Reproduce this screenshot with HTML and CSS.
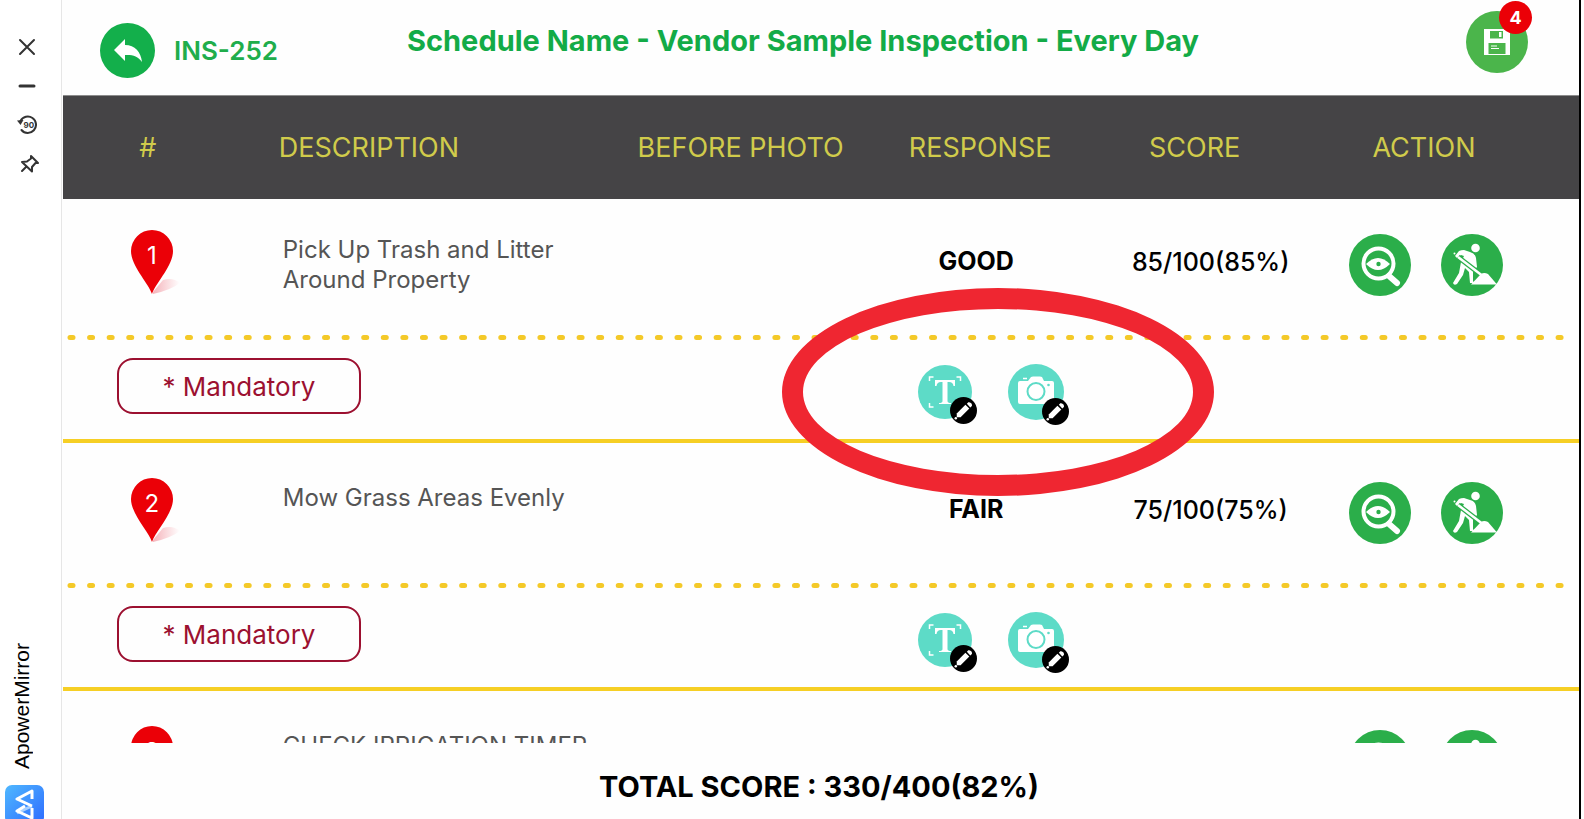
FILE: index.html
```html
<!DOCTYPE html>
<html lang="en">
<head>
    <meta charset="utf-8">
    <title>INS-252</title>
    <link rel="stylesheet" href="styles.css">
</head>
<body>
    <!-- shared icons -->
    <svg class="icon-defs" aria-hidden="true">
        <symbol id="pin" viewBox="0 0 52 68">
            <path d="M22 62 L32 50 Q42 47 49 53 Q40 60 22 64z" fill="url(#pin-shadow)"/>
            <path d="M21 64 C18 54 0 36 0 21 A21 21 0 0 1 42 21 C42 36 24 54 21 64z" fill="#eb0007"/>
        </symbol>
        <linearGradient id="pin-shadow" x1="0" y1="0" x2="1" y2="0">
            <stop offset="0" stop-color="#f5b4bb"/>
            <stop offset="1" stop-color="#fff"/>
        </linearGradient>
        <symbol id="view" viewBox="0 0 62 62">
            <circle cx="31" cy="31" r="31" fill="#2bae4a"/>
            <path d="M40 42 L48 49" stroke="#fff" stroke-width="6" stroke-linecap="round"/>
            <circle cx="29.500" cy="29.500" r="15" fill="none" stroke="#fff" stroke-width="4"/>
            <path d="M17 30 Q29 18 41 30 Q29 42 17 30z" fill="#fff"/>
            <circle cx="29.500" cy="30" r="2.200" fill="#2bae4a"/>
        </symbol>
        <symbol id="work" viewBox="0 0 62 62">
            <circle cx="31" cy="31" r="31" fill="#2bae4a"/>
            <circle cx="34.500" cy="14" r="4.300" fill="#fff"/>
            <path d="M14 22 L18 17 Q20 16 23 16 L29 18 Q34 19 35 24 L36 33 L32 38 L32 47 L33 49 L29 49 L28 38 L24 34 L22 41 L16 50 Q13 52 12 49 L18 39 L20 28 L23 22 L20 21 L16 24z" fill="#fff"/>
            <path d="M17 23 L43 43" stroke="#2bae4a" stroke-width="5"/>
            <path d="M17 23 L43 43" stroke="#fff" stroke-width="2.500"/>
            <path d="M30 50.500 L40 40 Q43 38 47 40 L56 50.500z" fill="#fff"/>
            <circle cx="13.500" cy="19.500" r="1" fill="#fff"/>
        </symbol>
        <symbol id="text" viewBox="0 0 54 54">
            <circle cx="27" cy="27" r="27" fill="#5ddbc7"/>
            <path d="M11.500 16 v-4 h4 M38.500 12 h4 v4 M11.500 38 v4 h4" fill="none" stroke="#fff" stroke-width="1.500"/>
            <path d="M17 15 H37 V21 H35.500 Q35 17 31 17 H29.500 V36 Q29.500 38 33 38 V39 H21 V38 Q24.500 38 24.500 36 V17 H23 Q19 17 18.500 21 H17z" fill="#fff"/>
        </symbol>
        <symbol id="camera" viewBox="0 0 56 56">
            <circle cx="28" cy="28" r="28" fill="#5ddbc7"/>
            <path d="M15 14.500 h4" stroke="#fff" stroke-width="1.500"/>
            <path d="M12 17 H20 L23 13 Q24 12.500 25 12.500 H32 Q33 12.500 34 13 L36 17 H44 Q46 17 46 19 V38 Q46 40 44 40 H12 Q10 40 10 38 V19 Q10 17 12 17z" fill="#fff"/>
            <circle cx="28" cy="27.500" r="8.500" fill="none" stroke="#5ddbc7" stroke-width="2"/>
            <circle cx="40.500" cy="21" r="1.300" fill="#5ddbc7"/>
        </symbol>
        <symbol id="pencil" viewBox="0 0 28 28">
            <circle cx="14" cy="14" r="14" fill="#000"/>
            <path d="M7 17 L16 8 L20 12 L11 21 L7 21z" fill="#fff"/>
            <path d="M17.500 7 L19 5.500 Q21 5 22.500 7 Q23.500 9 22 10 L21 11z" fill="#fff"/>
            <circle cx="6" cy="22" r="1.300" fill="#fff"/>
        </symbol>
    </svg>

    <div class="app">
        <!-- mirror toolbar -->
        <aside class="sidebar">
            <div class="tools">
                <button class="tool" aria-label="Close">
                    <svg width="18" height="18" viewBox="0 0 18 18"><path d="M2 2 L16 16 M16 2 L2 16"/></svg>
                </button>
                <button class="tool" aria-label="Minimize">
                    <svg width="18" height="18" viewBox="0 0 18 18"><path d="M2 9 H16" stroke-width="3"/></svg>
                </button>
                <button class="tool" aria-label="Rotate">
                    <svg width="20" height="20" viewBox="0 0 20 20">
                        <path d="M3.500 6 A8.200 8.200 0 1 1 4.500 15"/>
                        <path d="M0 5.500 L6.500 5 L3.500 10z" fill="#333" stroke-width="0"/>
                        <text x="6.500" y="13" font-size="8">90</text>
                    </svg>
                </button>
                <button class="tool tool-pin" aria-label="Pin">
                    <svg width="20" height="20" viewBox="0 0 20 20"><path d="M11 2 L18 9 L15.500 9 L12 13 L12 17.500 L2 8 L7 7.500 L11 4.500z M6.500 12.500 L2 17"/></svg>
                </button>
            </div>
            <div class="brand">
                <span class="brand-name">ApowerMirror</span>
                <svg class="brand-logo" viewBox="0 0 39 39">
                    <defs>
                        <linearGradient id="brand-bg" x1="0" y1="0" x2="1" y2="1">
                            <stop offset="0" stop-color="#4fb8ff"/>
                            <stop offset="1" stop-color="#2e6bff"/>
                        </linearGradient>
                    </defs>
                    <rect width="39" height="39" rx="7" fill="url(#brand-bg)"/>
                    <path d="M27 21 L12 28" stroke="#a9d0ff" stroke-width="3"/>
                    <path d="M27 14 V6 L12 14 L27 21 M27 23 V33 L12 26 L20 21" fill="none" stroke="#fff" stroke-width="3" stroke-linejoin="round"/>
                </svg>
            </div>
        </aside>

        <main class="main">
            <header class="header">
                <div class="header-left">
                    <button class="back-btn" aria-label="Back">
                        <svg width="55" height="55" viewBox="0 0 55 55">
                            <circle cx="27.500" cy="27.500" r="27.500" fill="#13af4b"/>
                            <path d="M14 27 L25 16 V22 C35 22 41 29 42 39 C38 33 32 31.500 25 32 V38z" fill="#fff"/>
                        </svg>
                    </button>
                    <span class="ticket">INS-252</span>
                </div>
                <h1 class="title">Schedule Name - Vendor Sample Inspection - Every Day</h1>
                <button class="save-btn" aria-label="Save">
                    <svg width="62" height="62" viewBox="0 0 62 62">
                        <circle cx="31" cy="31" r="31" fill="#4bb54b"/>
                        <path d="M18 18 H44 V44 H18z" fill="#fff"/>
                        <path d="M24 20 H37 V27.500 H24z M22.500 32 H39.500 V43 H22.500z" fill="#4bb54b"/>
                        <path d="M33 21 h2.500 v5 h-2.500z" fill="#fff"/>
                        <path d="M25 35 h6 M25 37.500 h8" stroke="#fff" stroke-width="1"/>
                    </svg>
                    <span class="badge">4</span>
                </button>
            </header>

            <div class="list">
                <table class="inspection">
                    <colgroup>
                        <col class="col-num">
                        <col class="col-desc">
                        <col class="col-photo">
                        <col class="col-response">
                        <col class="col-score">
                        <col class="col-action">
                    </colgroup>
                    <thead>
                        <tr>
                            <th>#</th>
                            <th class="desc">DESCRIPTION</th>
                            <th>BEFORE PHOTO</th>
                            <th>RESPONSE</th>
                            <th>SCORE</th>
                            <th class="action">ACTION</th>
                        </tr>
                    </thead>
                    <tbody>
                        <tr class="item">
                            <td class="num"><div class="pin"><svg><use href="#pin"/></svg><span>1</span></div></td>
                            <td class="desc">Pick Up Trash and Litter Around Property</td>
                            <td></td>
                            <td class="response">GOOD</td>
                            <td class="score">85/100(85%)</td>
                            <td class="action">
                                <div class="actions">
                                    <button aria-label="View"><svg><use href="#view"/></svg></button>
                                    <button aria-label="Work"><svg><use href="#work"/></svg></button>
                                </div>
                            </td>
                        </tr>
                        <tr class="dots"><td colspan="6"><svg><line x1="7" y1="2.500" x2="99%" y2="2.500"/></svg></td></tr>
                        <tr class="extra">
                            <td colspan="3"><span class="mandatory">* Mandatory</span></td>
                            <td>
                                <div class="notes">
                                    <button class="note note-text" aria-label="Edit text"><svg><use href="#text"/></svg><svg class="edit"><use href="#pencil"/></svg></button>
                                    <button class="note note-photo" aria-label="Edit photo"><svg><use href="#camera"/></svg><svg class="edit"><use href="#pencil"/></svg></button>
                                </div>
                            </td>
                            <td colspan="2"></td>
                        </tr>
                    </tbody>
                    <tbody>
                        <tr class="item">
                            <td class="num"><div class="pin"><svg><use href="#pin"/></svg><span>2</span></div></td>
                            <td class="desc">Mow Grass Areas Evenly</td>
                            <td></td>
                            <td class="response">FAIR</td>
                            <td class="score">75/100(75%)</td>
                            <td class="action">
                                <div class="actions">
                                    <button aria-label="View"><svg><use href="#view"/></svg></button>
                                    <button aria-label="Work"><svg><use href="#work"/></svg></button>
                                </div>
                            </td>
                        </tr>
                        <tr class="dots"><td colspan="6"><svg><line x1="7" y1="2.500" x2="99%" y2="2.500"/></svg></td></tr>
                        <tr class="extra">
                            <td colspan="3"><span class="mandatory">* Mandatory</span></td>
                            <td>
                                <div class="notes">
                                    <button class="note note-text" aria-label="Edit text"><svg><use href="#text"/></svg><svg class="edit"><use href="#pencil"/></svg></button>
                                    <button class="note note-photo" aria-label="Edit photo"><svg><use href="#camera"/></svg><svg class="edit"><use href="#pencil"/></svg></button>
                                </div>
                            </td>
                            <td colspan="2"></td>
                        </tr>
                    </tbody>
                    <tbody>
                        <tr class="item">
                            <td class="num"><div class="pin"><svg><use href="#pin"/></svg><span>3</span></div></td>
                            <td class="desc">CHECK IRRIGATION TIMER</td>
                            <td></td>
                            <td></td>
                            <td></td>
                            <td class="action">
                                <div class="actions">
                                    <button aria-label="View"><svg><use href="#view"/></svg></button>
                                    <button aria-label="Work"><svg><use href="#work"/></svg></button>
                                </div>
                            </td>
                        </tr>
                    </tbody>
                </table>
            </div>

            <footer class="total">TOTAL SCORE : 330/400(82%)</footer>

            <!-- highlight round the note buttons -->
            <div class="highlight"></div>
        </main>
    </div>
</body>
</html>
```

FILE: styles.css
```css
* {
    box-sizing: border-box;
}

body {
    margin: 0;
    background: #fefefe;
    font-family: Inter, "Liberation Sans", sans-serif;
    color: #000;
    overflow: hidden;
}

button {
    padding: 0;
    border: 0;
    background: none;
    font: inherit;
    cursor: pointer;
}

svg {
    display: block;
}

.icon-defs {
    position: absolute;
    width: 0;
    height: 0;
}

.app {
    display: flex;
    height: 100vh;
    padding-right: 3px;
}

/* sidebar */
.sidebar {
    display: flex;
    flex-direction: column;
    justify-content: space-between;
    width: 63px;
    flex-shrink: 0;
    background: linear-gradient(to right, #fff 61px, #e6e6e6 61px, #e6e6e6 62px, #fefefe 62px);
}

.tools {
    display: flex;
    flex-direction: column;
    align-items: flex-start;
    gap: 19px;
    padding: 37px 0 0 17px;
}

.tool {
    display: flex;
    align-items: center;
    justify-content: center;
    width: 20px;
    height: 20px;
}

.tool svg {
    fill: none;
    stroke: #333;
    stroke-width: 2;
    stroke-linecap: round;
    stroke-linejoin: round;
}

.tool text {
    fill: #333;
    stroke: none;
    font-weight: 700;
}

.tool-pin {
    margin-left: 3px;
}

.brand {
    display: flex;
    flex-direction: column;
    align-items: flex-start;
    gap: 16px;
    padding-left: 5px;
    margin-bottom: -5px;
}

.brand-name {
    width: 34px;
    writing-mode: vertical-rl;
    transform: rotate(180deg);
    font: 21px/34px "Liberation Sans", Arial, sans-serif;
}

.brand-logo {
    width: 39px;
    height: 39px;
}

/* main area */
.main {
    position: relative;
    display: flex;
    flex: 1;
    flex-direction: column;
    min-width: 0;
    border-right: 2px solid #000;
}

.header {
    display: grid;
    grid-template-columns: 200px 1fr 222px;
    align-items: start;
    height: 96px;
    flex-shrink: 0;
    padding: 11px 51px 0 37px;
    border-bottom: 1px solid #8c8c8c;
}

.header-left {
    display: flex;
    align-items: center;
    gap: 19px;
    padding-top: 12px;
}

.ticket {
    color: #20ad4b;
    font-size: 26px;
    font-weight: 600;
    white-space: nowrap;
}

.title {
    margin: 12px 0 0;
    color: #13ab47;
    font-size: 29px;
    font-weight: 700;
    line-height: 36px;
    text-align: center;
    white-space: nowrap;
}

.save-btn {
    position: relative;
    justify-self: end;
}

.badge {
    position: absolute;
    top: -10px;
    right: -4px;
    width: 33px;
    height: 33px;
    border-radius: 50%;
    background: #eb0007;
    color: #fff;
    font-size: 18px;
    font-weight: 700;
    line-height: 33px;
    text-align: center;
}

/* inspection table */
.list {
    flex: 1;
    min-height: 0;
    overflow: hidden;
}

.inspection {
    width: 100%;
    table-layout: fixed;
    border-collapse: separate;
    border-spacing: 0;
}

.col-num { width: 11.2%; }
.col-desc { width: 25.5%; }
.col-photo { width: 16%; }
.col-response { width: 15.6%; }
.col-score { width: 12.7%; }
.col-action { width: 19%; }

.inspection th {
    height: 99px;
    padding: 4px 0 0;
    background: #454446;
    box-shadow: 0 4px 0 #454446;
    color: #d0cb4b;
    font-size: 27px;
    font-weight: 400;
    text-align: center;
}

.inspection th.desc {
    padding-left: 46px;
    text-align: left;
}

.inspection th.action {
    padding-right: 22px;
}

.inspection td {
    padding: 0;
    vertical-align: top;
    font-size: 24px;
    line-height: 30px;
    text-align: center;
}

.item td {
    height: 140px;
}

.item .num {
    padding: 35px 0 0 8px;
}

.pin {
    position: relative;
    width: 42px;
    margin: 0 auto;
}

.pin svg {
    width: 52px;
    height: 68px;
}

.pin span {
    position: absolute;
    top: 11px;
    left: 0;
    width: 42px;
    color: #fff;
}

.item .desc {
    padding: 40px 20px 0 50px;
    color: #555;
    text-align: left;
}

.item .response {
    padding: 51px 8px 0 0;
    font-size: 25px;
    font-weight: 700;
}

.item .score {
    padding: 52px 0 0 32px;
    font-size: 25px;
    font-weight: 500;
    white-space: nowrap;
}

.item .action {
    padding: 39px 18px 0 0;
}

.actions {
    display: flex;
    justify-content: center;
    gap: 30px;
}

.actions svg {
    width: 62px;
    height: 62px;
}

.dots svg {
    width: 100%;
    height: 5px;
}

.dots line {
    stroke: #f4c928;
    stroke-width: 5;
    stroke-linecap: round;
    stroke-dasharray: 3 16.58;
}

.extra td {
    height: 103px;
    border-bottom: 4px solid #f6cf25;
    text-align: left;
}

.mandatory {
    display: block;
    width: 244px;
    margin: 18px 0 0 54px;
    padding-top: 2px;
    border: 2px solid #9c1030;
    border-radius: 16px;
    color: #9c1030;
    font-size: 26px;
    line-height: 50px;
    text-align: center;
}

.notes {
    display: flex;
    align-items: center;
    justify-content: center;
    gap: 36px;
    padding: 24px 0 0 22px;
}

.note {
    position: relative;
}

.note-text svg {
    width: 54px;
    height: 54px;
}

.note-photo svg {
    width: 56px;
    height: 56px;
}

.note .edit {
    position: absolute;
    right: -5px;
    bottom: -5px;
    width: 27px;
    height: 27px;
}

.total {
    flex-shrink: 0;
    height: 76px;
    padding: 26px 4px 0 0;
    font-size: 29px;
    font-weight: 700;
    line-height: 36px;
    text-align: center;
}

.highlight {
    position: absolute;
    top: 288px;
    left: 47.4%;
    width: 432px;
    height: 208px;
    border: 21px solid #ef2631;
    border-radius: 50%;
    pointer-events: none;
}
```
